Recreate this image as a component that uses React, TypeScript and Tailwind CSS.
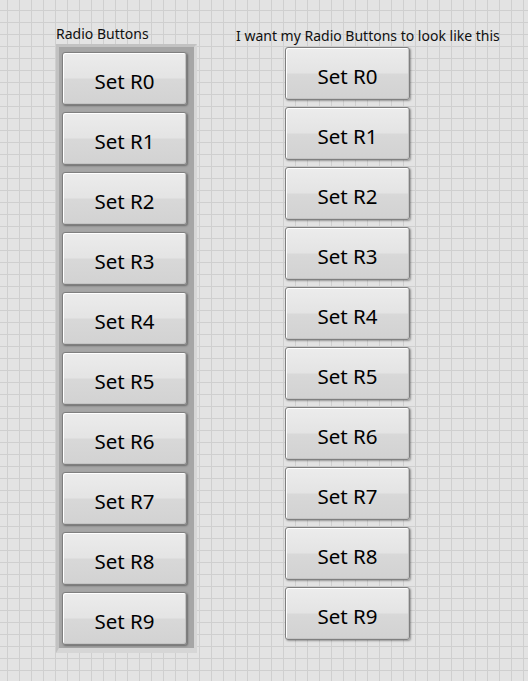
import React from "react";

const labels = ["R0", "R1", "R2", "R3", "R4", "R5", "R6", "R7", "R8", "R9"];

function SetButton({ name }: { name: string }) {
  return (
    <button className="flex h-[53px] w-[125px] items-center justify-center rounded-[3px] border border-[#7f7f7f] bg-[linear-gradient(#ececec_0%,#e4e4e4_48%,#d8d8d8_52%,#d2d2d2_100%)] pt-[6px] text-[20.5px] text-black shadow-[inset_1px_1px_0_#ffffff,inset_-1px_-1px_0_#c4c4c4,1px_1px_2px_rgba(0,0,0,0.35)] [font-family:'Noto_Sans',sans-serif]">
      Set {name}
    </button>
  );
}

export default function App() {
  return (
    <div className="h-[681px] w-[528px] overflow-hidden bg-[#e3e3e3] bg-[linear-gradient(#cfcfcf_1px,transparent_1px),linear-gradient(90deg,#cfcfcf_1px,transparent_1px)] bg-[length:12px_12px] bg-[position:7px_10px] [font-family:'Noto_Sans',sans-serif]">
      <div className="flex pl-[56px] pt-[25px]">
        <div className="flex flex-col">
          <div className="h-[19px] text-[14px] leading-[17px] text-[#101010]">Radio Buttons</div>
          <div className="flex w-[141px] flex-col gap-[7px] border-[3px] border-b-[5px] border-b-[#d6d6d6] border-l-[#c2c2c2] border-r-[#d6d6d6] border-t-[#c2c2c2] bg-[#a6a6a6] pb-[3px] pl-[3px] pr-[6px] pt-[5px]">
            {labels.map((l) => (
              <SetButton key={l} name={l} />
            ))}
          </div>
        </div>
        <div className="ml-[39px] flex flex-col">
          <div className="h-[22px] pt-[2px] text-[14px] leading-[17px] text-[#101010]">
            I want my Radio Buttons to look like this
          </div>
          <div className="ml-[49px] flex flex-col gap-[7px]">
            {labels.map((l) => (
              <SetButton key={l} name={l} />
            ))}
          </div>
        </div>
      </div>
    </div>
  );
}
